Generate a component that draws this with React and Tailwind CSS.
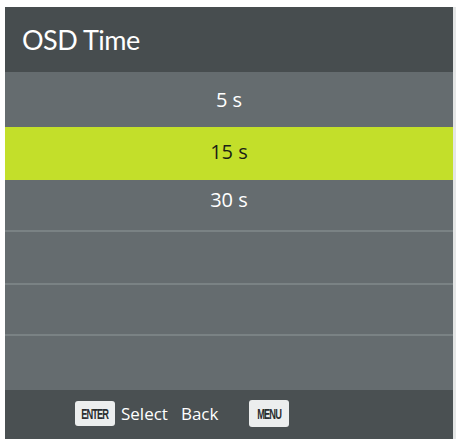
export default function App() {
  const font = { fontFamily: '"Open Sans", "Noto Sans", sans-serif' };
  return (
    <div className="w-[462px] h-[439px] bg-white overflow-hidden pt-[7px] pl-[5px]" style={font}>
      <div className="w-[451px] flex flex-col border-r-[3px] border-[#e4e6e6]">
        <div className="h-[65px] bg-[#474d4f] flex items-center pl-[17px] pt-[2px]">
          <span className="text-white text-[27px] tracking-[-0.5px]" style={{ fontFamily: 'Lato, "Open Sans", sans-serif' }}>OSD Time</span>
        </div>
        <div className="h-[55px] bg-[#656c6f] flex items-center justify-center">
          <span className="text-white text-[20px]">5 s</span>
        </div>
        <div className="h-[53px] bg-[#c3df2a] flex items-center justify-center pb-[3px]">
          <span className="text-[#1c1f16] text-[20px]">15 s</span>
        </div>
        <div className="h-[50px] bg-[#656c6f] flex items-start justify-center pt-[5px]">
          <span className="text-white text-[20px]">30 s</span>
        </div>
        <div className="h-[53px] bg-[#656c6f] border-t-2 border-[#7a8284]"></div>
        <div className="h-[51px] bg-[#656c6f] border-t-2 border-[#7a8284]"></div>
        <div className="h-[56px] bg-[#656c6f] border-t-2 border-[#7a8284]"></div>
        <div className="h-[49px] bg-[#4a5052] flex items-center pl-[70px] pb-[2px]">
          <span className="bg-[#eceeee] rounded-[3px] w-[40px] h-[25px] flex items-center justify-center overflow-hidden">
            <span className="text-[#2a2d2e] text-[15px] leading-none font-bold tracking-[-1.5px] scale-x-[0.62] inline-block" style={{ fontFamily: '"Liberation Sans", sans-serif' }}>ENTER</span>
          </span>
          <span className="text-white text-[17px] ml-[6px]">Select</span>
          <span className="text-white text-[17px] ml-[13px]">Back</span>
          <span className="bg-[#eceeee] rounded-[3px] w-[40px] h-[27px] ml-[31px] flex items-center justify-center overflow-hidden">
            <span className="text-[#2a2d2e] text-[15px] leading-none font-bold tracking-[-1.5px] scale-x-[0.62] inline-block" style={{ fontFamily: '"Liberation Sans", sans-serif' }}>MENU</span>
          </span>
        </div>
      </div>
    </div>
  );
}
